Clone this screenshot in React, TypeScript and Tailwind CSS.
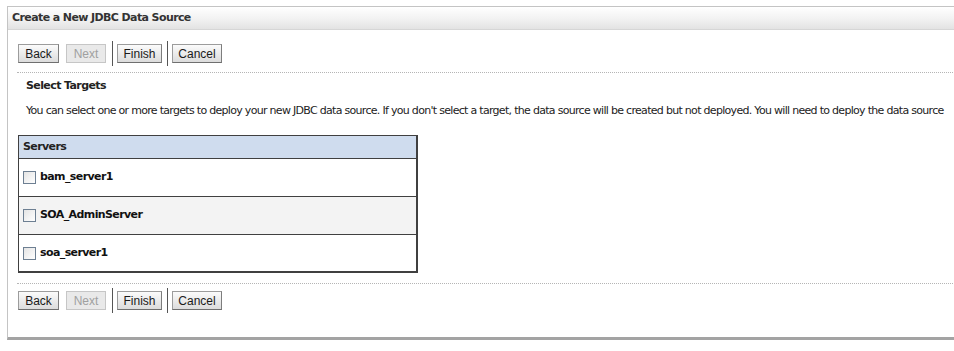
import React from "react";

const font = { fontFamily: "Tahoma, 'DejaVu Sans', 'Liberation Sans', sans-serif" };

function Btn({ label, w, disabled }: { label: string; w: string; disabled?: boolean }) {
  return (
    <button
      className={
        w +
        (disabled
          ? " h-[19px] text-[12px] leading-none border border-[#c6c6c6] bg-[#e9e9e9] text-[#a0a0a0]"
          : " h-[19px] text-[12px] leading-none border border-[#9c9c9c] border-b-[#6f6f6f] border-r-[#7d7d7d] bg-gradient-to-b from-[#fbfbfb] to-[#dcdcdc] text-[#1a1a1a]")
      }
      style={{ fontFamily: "'Liberation Sans', Arial, sans-serif" }}
    >
      {label}
    </button>
  );
}

function ButtonBar() {
  return (
    <div className="flex items-center h-[25px] pl-[10px]">
      <Btn label="Back" w="w-[41px]" />
      <div className="ml-[7px] flex"><Btn label="Next" w="w-[40px]" disabled /></div>
      <div className="ml-[6px] w-px h-[25px] bg-[#555]" />
      <div className="ml-[4px] flex"><Btn label="Finish" w="w-[45px]" /></div>
      <div className="ml-[5px] w-px h-[25px] bg-[#555]" />
      <div className="ml-[4px] flex"><Btn label="Cancel" w="w-[50px]" /></div>
    </div>
  );
}

function Check() {
  return (
    <span className="inline-block w-[13px] h-[13px] border border-[#6d7f92] bg-gradient-to-br from-[#e4e4e4] to-[#ffffff] mr-[4px] shrink-0" />
  );
}

const servers = ["bam_server1", "SOA_AdminServer", "soa_server1"];

export default function App() {
  return (
    <div className="w-[954px] h-[351px] overflow-hidden bg-white tracking-[-0.6px]" style={font}>
      <div className="pl-[7px] pt-[6px]">
        <div className="w-[1000px] h-[334px] border-l border-t border-[#c4c4c4] border-b-[3px] border-b-[#a3a3a3] flex flex-col">
          {/* header */}
          <div className="h-[23px] flex items-center pl-[4px] bg-gradient-to-b from-[#ffffff] via-[#f3f3f3] to-[#e3e3e3] border-b border-[#d6d6d6]">
            <span className="text-[11px] font-bold text-[#333]">Create a New JDBC Data Source</span>
          </div>

          <div className="mt-[11px] tracking-normal"><ButtonBar /></div>
          <div className="mt-[6px] ml-[9px] border-t border-dotted border-[#b5b5b5]" />

          <div className="mt-[6px] ml-[18px] text-[11px] font-bold text-[#222] leading-[14px]">Select Targets</div>
          <div className="mt-[11px] ml-[18px] text-[11px] text-[#222] leading-[14px] whitespace-nowrap tracking-[-0.7px]">
            You can select one or more targets to deploy your new JDBC data source. If you don't select a target, the data source will be created but not deployed. You will need to deploy the data source
          </div>

          {/* servers table */}
          <div className="mt-[17px] ml-[10px] w-[400px] border border-[#404040] border-r-2 border-b-2">
            <div className="h-[23px] flex items-center pl-[4px] bg-[#cfdcee] border-b border-[#404040]">
              <span className="text-[11px] font-bold text-[#222]">Servers</span>
            </div>
            {servers.map((s, i) => (
              <div
                key={s}
                className={
                  "flex items-center pl-[4px] " +
                  (i % 2 === 1 ? "bg-[#f3f3f3] " : "bg-white ") +
                  (i < servers.length - 1 ? "h-[38px] border-b border-[#404040]" : "h-[36px]")
                }
              >
                <Check />
                <span className="text-[11px] font-bold text-[#111]">{s}</span>
              </div>
            ))}
          </div>

          <div className="mt-[10px] ml-[9px] border-t border-dotted border-[#b5b5b5]" />
          <div className="mt-[4px] tracking-normal"><ButtonBar /></div>
        </div>
      </div>
    </div>
  );
}
